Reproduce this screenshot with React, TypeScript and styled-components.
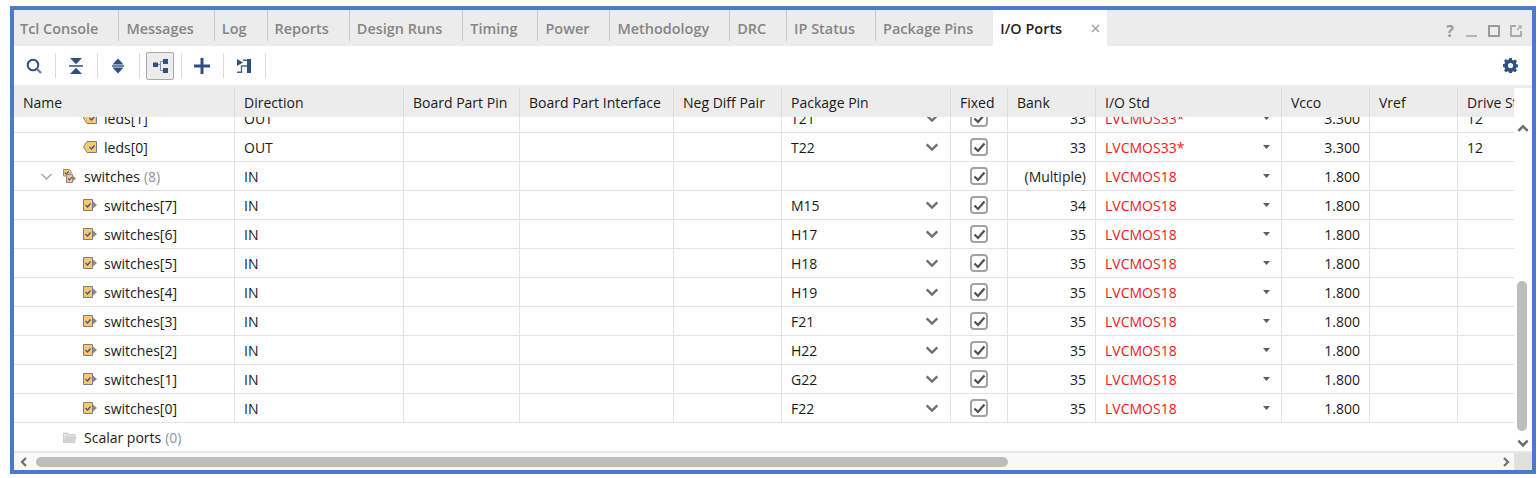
import * as React from 'react';
import styled, { createGlobalStyle } from 'styled-components';

const FONT = `"Open Sans", "Noto Sans", "Liberation Sans", sans-serif`;
const NAVY = '#2f5085';
const COLUMNS = '221px 169px 116px 154px 108px 169px 57px 88px 186px 88px 88px 56px';

const TABS = [
  'Tcl Console',
  'Messages',
  'Log',
  'Reports',
  'Design Runs',
  'Timing',
  'Power',
  'Methodology',
  'DRC',
  'IP Status',
  'Package Pins',
];

const HEADERS = [
  'Name',
  'Direction',
  'Board Part Pin',
  'Board Part Interface',
  'Neg Diff Pair',
  'Package Pin',
  'Fixed',
  'Bank',
  'I/O Std',
  'Vcco',
  'Vref',
  'Drive Strength',
];

type PortRow = {
  name: string;
  kind: 'in' | 'out' | 'group';
  dir: string;
  pin?: string;
  bank: string;
  std: string;
  vcco: string;
  drive?: string;
  count?: number;
};

const ROWS: PortRow[] = [
  { name: 'leds[1]', kind: 'out', dir: 'OUT', pin: 'T21', bank: '33', std: 'LVCMOS33*', vcco: '3.300', drive: '12' },
  { name: 'leds[0]', kind: 'out', dir: 'OUT', pin: 'T22', bank: '33', std: 'LVCMOS33*', vcco: '3.300', drive: '12' },
  { name: 'switches', kind: 'group', count: 8, dir: 'IN', bank: '(Multiple)', std: 'LVCMOS18', vcco: '1.800' },
  { name: 'switches[7]', kind: 'in', dir: 'IN', pin: 'M15', bank: '34', std: 'LVCMOS18', vcco: '1.800' },
  { name: 'switches[6]', kind: 'in', dir: 'IN', pin: 'H17', bank: '35', std: 'LVCMOS18', vcco: '1.800' },
  { name: 'switches[5]', kind: 'in', dir: 'IN', pin: 'H18', bank: '35', std: 'LVCMOS18', vcco: '1.800' },
  { name: 'switches[4]', kind: 'in', dir: 'IN', pin: 'H19', bank: '35', std: 'LVCMOS18', vcco: '1.800' },
  { name: 'switches[3]', kind: 'in', dir: 'IN', pin: 'F21', bank: '35', std: 'LVCMOS18', vcco: '1.800' },
  { name: 'switches[2]', kind: 'in', dir: 'IN', pin: 'H22', bank: '35', std: 'LVCMOS18', vcco: '1.800' },
  { name: 'switches[1]', kind: 'in', dir: 'IN', pin: 'G22', bank: '35', std: 'LVCMOS18', vcco: '1.800' },
  { name: 'switches[0]', kind: 'in', dir: 'IN', pin: 'F22', bank: '35', std: 'LVCMOS18', vcco: '1.800' },
];

const GlobalStyle = createGlobalStyle`
  html, body {
    margin: 0;
    background: #fff;
  }
  body {
    font-family: ${FONT};
    font-size: 14px;
    color: #1a1a1a;
  }
`;

const Page = styled.div`
  box-sizing: border-box;
  width: 1540px;
  height: 478px;
  padding: 6px 4px 0 10px;
  overflow: hidden;
`;

const Frame = styled.div`
  box-sizing: border-box;
  height: 468px;
  border: 4px solid #4a7acb;
  display: flex;
  flex-direction: column;
  background: #fff;
`;

const TabBar = styled.div`
  display: flex;
  height: 36px;
  flex: none;
  background: #ececec;
`;

const Tab = styled.div`
  display: flex;
  align-items: center;
  height: 31px;
  padding: 5px 20px 0 7px;
  box-sizing: border-box;
  border-right: 1px solid #c8c8c8;
  font-weight: 600;
  font-size: 14.45px;
  color: #858585;
  white-space: nowrap;

  &:first-child {
    padding-left: 6px;
  }
`;

const ActiveTab = styled.div`
  display: flex;
  align-items: center;
  width: 114px;
  height: 36px;
  margin-left: -1px;
  padding: 0 7px;
  box-sizing: border-box;
  background: #fff;
  font-weight: 600;
  font-size: 14.45px;
  color: #222;
  white-space: nowrap;
`;

const CloseMark = styled.span`
  margin-left: auto;
  display: flex;
  color: #999;
`;

const WindowIcons = styled.div`
  margin-left: auto;
  display: flex;
  align-items: center;
  gap: 6px;
  padding: 5px 8px 0 0;
`;

const HelpMark = styled.span`
  width: 16px;
  text-align: center;
  font-weight: 700;
  font-size: 16px;
  color: #9a9a9a;
`;

const Toolbar = styled.div`
  display: flex;
  align-items: center;
  height: 39px;
  flex: none;
  padding-left: 6px;
`;

const ToolButton = styled.div<{ $active?: boolean }>`
  display: flex;
  align-items: center;
  justify-content: center;
  box-sizing: border-box;
  width: 28px;
  height: 28px;
  border: 1px solid ${p => (p.$active ? '#a8a8a8' : 'transparent')};
  border-radius: 2px;
  background: ${p => (p.$active ? '#ececec' : 'transparent')};
`;

const ToolSeparator = styled.div`
  width: 1px;
  height: 25px;
  margin: 0 6px 0 7px;
  background: #dcdcdc;
`;

const GearSlot = styled.div`
  margin-left: auto;
  display: flex;
  padding-right: 14px;
`;

const TableArea = styled.div`
  flex: 1;
  min-height: 0;
  display: flex;
  flex-direction: column;
  border-top: 3px solid #ececec;
`;

const TableMain = styled.div`
  flex: 1;
  min-height: 0;
  display: flex;
`;

const TableColumn = styled.div`
  width: 1500px;
  flex: none;
  display: flex;
  flex-direction: column;
  min-height: 0;
`;

const HeaderRow = styled.div`
  display: grid;
  grid-template-columns: ${COLUMNS};
  height: 29px;
  flex: none;
  background: #ececec;
`;

const HeaderCell = styled.div`
  box-sizing: border-box;
  display: flex;
  align-items: center;
  padding: 0 9px;
  border-right: 1px solid #dcdcdc;
  white-space: nowrap;
  overflow: hidden;

  &:last-child {
    border-right: none;
    padding-right: 0;
  }
`;

const Rows = styled.div`
  flex: 1;
  min-height: 0;
  overflow: hidden;
`;

const RowsInner = styled.div`
  margin-top: -13px;
`;

const Row = styled.div`
  display: grid;
  grid-template-columns: ${COLUMNS};
  height: 29px;
  box-sizing: border-box;
  border-bottom: 1px solid #e3e3e3;
`;

const Cell = styled.div<{ $right?: boolean; $red?: boolean }>`
  box-sizing: border-box;
  display: flex;
  align-items: center;
  justify-content: ${p => (p.$right ? 'flex-end' : 'flex-start')};
  padding: 0 9px;
  border-right: 1px solid #e3e3e3;
  color: ${p => (p.$red ? '#f51616' : 'inherit')};
  white-space: nowrap;

  &:last-child {
    border-right: none;
  }
`;

const NameCell = styled(Cell)<{ $indent: number }>`
  padding-left: ${p => p.$indent}px;
`;

const CenterCell = styled(Cell)`
  justify-content: center;
  padding: 0;
`;

const SelectCell = styled(Cell)<{ $pad: number }>`
  justify-content: space-between;
  padding-right: ${p => p.$pad}px;
`;

const Expander = styled.span`
  display: flex;
  width: 18px;
  margin-right: 8px;
  justify-content: center;
`;

const PortGlyph = styled.span`
  display: flex;
  flex: none;
  width: 14px;
  margin-right: 7px;
`;

const Count = styled.span`
  margin-left: 4px;
  color: #8d939c;
`;

const CheckBox = styled.span`
  box-sizing: border-box;
  display: flex;
  align-items: center;
  justify-content: center;
  width: 18px;
  height: 18px;
  border: 2px solid #a2a2a2;
  border-radius: 4px;
  background: #fff;
`;

const ScalarRow = styled.div`
  box-sizing: border-box;
  display: flex;
  align-items: center;
  height: 29px;
  padding-left: 49px;
`;

const VerticalBar = styled.div`
  width: 18px;
  flex: none;
  margin-top: 29px;
  display: flex;
  flex-direction: column;
  align-items: center;
  background: #fff;
`;

const VerticalThumb = styled.div`
  width: 10px;
  height: 150px;
  margin: 146px 2px 0 0;
  border-radius: 5px;
  background: #bdbdbd;
`;

const BarArrow = styled.div<{ $top: number }>`
  display: flex;
  margin-top: ${p => p.$top}px;
`;

const HorizontalBar = styled.div`
  display: flex;
  height: 19px;
  flex: none;
  border-top: 2px solid #e6e6e6;
  background: #f8f8f8;
  box-sizing: border-box;
`;

const HorizontalTrack = styled.div`
  flex: 1;
  display: flex;
  align-items: center;
  padding-left: 4px;
`;

const HorizontalThumb = styled.div`
  width: 972px;
  height: 10px;
  margin-left: 6px;
  border-radius: 5px;
  background: #bdbdbd;
`;

const ArrowEnd = styled.div`
  margin-left: auto;
  padding-right: 2px;
  display: flex;
`;

const Corner = styled.div`
  width: 18px;
  flex: none;
  background: #e0e0e0;
`;

const Chevron = ({ dir, size = 12, color = '#6e6e6e', sw = 2.2 }: { dir: 'up' | 'down' | 'left' | 'right'; size?: number; color?: string; sw?: number }) => {
  const d = {
    up: 'M2 8.5 6 4.5l4 4',
    down: 'M2 4 6 8l4-4',
    left: 'M8 2 4 6l4 4',
    right: 'M4 2l4 4-4 4',
  }[dir];
  return (
    <svg width={size} height={size} viewBox="0 0 12 12" fill="none">
      <path d={d} stroke={color} strokeWidth={sw} />
    </svg>
  );
};

const PortIcon = ({ kind }: { kind: PortRow['kind'] }) => {
  if (kind === 'group') {
    return (
      <svg width="14" height="16" viewBox="0 0 14 16">
        <path d="M.5 1.500h6l2 3-2 3.500h-6z" fill="#fbc86f" stroke="#8a8a8a" />
        <path d="M3.500 6.500h6v8h-6z" fill="#fbc86f" stroke="#8a8a8a" />
        <path d="M10 8l3 2.500-3 2.500z" fill="#8a8a8a" />
        <path d="M2 4.500l1.500 1.500L6 3.500M5 10.500l1.500 1.500L9 9" fill="none" stroke="#3c5a8c" strokeWidth="1.100" />
      </svg>
    );
  }
  if (kind === 'out') {
    return (
      <svg width="14" height="16" viewBox="0 0 14 16">
        <path d="M4 2.500h9.500v11H4L.5 8z" fill="#fbc86f" stroke="#7d7d7d" />
        <path d="M6.500 8l2 2 3-3.500" fill="none" stroke="#34558c" strokeWidth="1.200" />
      </svg>
    );
  }
  return (
    <svg width="14" height="16" viewBox="0 0 14 16">
      <path d="M.5 2.500h9v11h-9z" fill="#fbc86f" stroke="#7d7d7d" />
      <path d="M10 4.500L14 8l-4 3.500z" fill="#8a8a8a" />
      <path d="M2.500 8l2 2 3-3.500" fill="none" stroke="#34558c" strokeWidth="1.200" />
    </svg>
  );
};

const Caret = () => (
  <svg width="7" height="4" viewBox="0 0 7 4">
    <path d="M0 0h7L3.500 4z" fill="#5c5c5c" />
  </svg>
);

const Check = () => (
  <svg width="13" height="13" viewBox="0 0 13 13" fill="none">
    <path d="M1.500 6.500l3.500 3.500L11.500 2.500" stroke="#4f4f4f" strokeWidth="2.200" />
  </svg>
);

const ToolIcon = ({ name }: { name: string }) => {
  switch (name) {
    case 'search':
      return (
        <svg width="16" height="16" viewBox="0 0 16 16" fill="none">
          <circle cx="7" cy="7" r="5.300" stroke={NAVY} strokeWidth="2" />
          <path d="M11 11l4 4" stroke="#6f7f99" strokeWidth="2.400" />
        </svg>
      );
    case 'collapse':
      return (
        <svg width="14" height="16" viewBox="0 0 14 16" fill={NAVY}>
          <path d="M1 0h12L7 6.200z" />
          <path d="M0 7.200h14v1.500H0z" />
          <path d="M7 9.800l6 6.200H1z" />
        </svg>
      );
    case 'expand':
      return (
        <svg width="12" height="16" viewBox="0 0 12 16" fill={NAVY}>
          <path d="M6 .5l5.500 6H.5zM.5 9.500h11l-5.500 6z" />
          <path d="M0 7.300h12v1.400H0z" />
        </svg>
      );
    case 'hierarchy':
      return (
        <svg width="16" height="16" viewBox="0 0 16 16">
          <path d="M6 6.500h2.500M11 3.500H8.500v9H11" fill="none" stroke="#7d8fae" />
          <path d="M1 4.500h5v4.500H1zM11 1h5v5h-5zM11 10h5v5h-5z" fill={NAVY} />
        </svg>
      );
    case 'plus':
      return (
        <svg width="16" height="16" viewBox="0 0 16 16" fill={NAVY}>
          <path d="M6.500 0h3v6.500H16v3H9.500V16h-3V9.500H0v-3h6.500z" />
        </svg>
      );
    default:
      return (
        <svg width="14" height="16" viewBox="0 0 14 16">
          <path d="M0 1l6 3.500L0 8z" fill={NAVY} />
          <path d="M6 2.200h4M0 14.300h4.500V8H10" fill="none" stroke="#4d648f" strokeWidth="1.400" />
          <path d="M10 1h4v14h-4z" fill={NAVY} />
        </svg>
      );
  }
};

const Gear = () => (
  <svg width="15" height="15" viewBox="0 0 16 16">
    <path
      fillRule="evenodd"
      fill={NAVY}
      d="M6.600 0h2.800l.4 2.100 1.300.6 1.800-1.200 2 2-1.200 1.800.6 1.300 2.100.4v2.800l-2.100.4-.6 1.300 1.200 1.800-2 2-1.800-1.200-1.300.6-.4 2.100H6.600l-.4-2.100-1.300-.6-1.800 1.200-2-2 1.200-1.800-.6-1.300L-.400 9.400V6.600l2.100-.4.6-1.300L1.100 3.100l2-2 1.800 1.200 1.300-.6zM8 5.200a2.800 2.800 0 1 0 0 5.600 2.800 2.800 0 0 0 0-5.600z"
    />
  </svg>
);

const Folder = () => (
  <svg width="14" height="12" viewBox="0 0 14 12">
    <path d="M.5 1h4.500l1 1.500h6V5H3L.5 11z" fill="#e2e2e2" stroke="#c4c4c4" strokeWidth=".8" />
    <path d="M3 5h10.500l-1.500 6H.5z" fill="#d2d2d2" />
  </svg>
);

const ToolGroups = ['search', 'collapse', 'expand', 'hierarchy', 'plus', 'port'];

const App = () => (
  <>
    <GlobalStyle />
    <Page>
      <Frame>
        <TabBar>
          {TABS.map(tab => (
            <Tab key={tab}>{tab}</Tab>
          ))}
          <ActiveTab>
            I/O Ports
            <CloseMark>
              <svg width="9" height="9" viewBox="0 0 9 9" fill="none">
                <path d="M1 1l7 7M8 1L1 8" stroke="#999" strokeWidth="1.200" />
              </svg>
            </CloseMark>
          </ActiveTab>
          <WindowIcons>
            <HelpMark>?</HelpMark>
            <svg width="16" height="16" viewBox="0 0 16 16" fill="none">
              <path d="M2 13h11" stroke="#a8a8a8" strokeWidth="1.600" />
            </svg>
            <svg width="16" height="16" viewBox="0 0 16 16" fill="none">
              <path d="M3 3h10v10H3z" stroke="#9a9a9a" strokeWidth="2" />
            </svg>
            <svg width="16" height="16" viewBox="0 0 16 16" fill="none">
              <path d="M8 3H3v10h10V8" stroke="#a8a8a8" strokeWidth="1.800" />
              <path d="M9 7l4-4M10 3h3v3" stroke="#a8a8a8" strokeWidth="1.200" />
            </svg>
          </WindowIcons>
        </TabBar>
        <Toolbar>
          {ToolGroups.map(name => (
            <React.Fragment key={name}>
              <ToolButton $active={name === 'hierarchy'}>
                <ToolIcon name={name} />
              </ToolButton>
              <ToolSeparator />
            </React.Fragment>
          ))}
          <GearSlot>
            <Gear />
          </GearSlot>
        </Toolbar>
        <TableArea>
          <TableMain>
            <TableColumn>
              <HeaderRow>
                {HEADERS.map(header => (
                  <HeaderCell key={header}>{header}</HeaderCell>
                ))}
              </HeaderRow>
              <Rows>
                <RowsInner>
                  {ROWS.map(row => (
                    <Row key={row.name}>
                      <NameCell $indent={row.kind === 'group' ? 23 : 69}>
                        {row.kind === 'group' && (
                          <Expander>
                            <Chevron dir="down" size={15} color="#a6a6a6" sw={1.100} />
                          </Expander>
                        )}
                        <PortGlyph>
                          <PortIcon kind={row.kind} />
                        </PortGlyph>
                        {row.name}
                        {row.count !== undefined && <Count>({row.count})</Count>}
                      </NameCell>
                      <Cell>{row.dir}</Cell>
                      <Cell />
                      <Cell />
                      <Cell />
                      <SelectCell $pad={10}>
                        {row.pin}
                        {row.pin && <Chevron dir="down" size={16} color="#707070" sw={1.800} />}
                      </SelectCell>
                      <CenterCell>
                        <CheckBox>
                          <Check />
                        </CheckBox>
                      </CenterCell>
                      <Cell $right>{row.bank}</Cell>
                      <SelectCell $red $pad={11}>
                        {row.std}
                        <Caret />
                      </SelectCell>
                      <Cell $right>{row.vcco}</Cell>
                      <Cell />
                      <Cell>{row.drive}</Cell>
                    </Row>
                  ))}
                  <ScalarRow>
                    <PortGlyph>
                      <Folder />
                    </PortGlyph>
                    Scalar ports
                    <Count>(0)</Count>
                  </ScalarRow>
                </RowsInner>
              </Rows>
            </TableColumn>
            <VerticalBar>
              <BarArrow $top={4}>
                <Chevron dir="up" size={14} />
              </BarArrow>
              <VerticalThumb />
              <BarArrow $top={5}>
                <Chevron dir="down" size={14} />
              </BarArrow>
            </VerticalBar>
          </TableMain>
          <HorizontalBar>
            <HorizontalTrack>
              <Chevron dir="left" size={12} />
              <HorizontalThumb />
              <ArrowEnd>
                <Chevron dir="right" size={12} />
              </ArrowEnd>
            </HorizontalTrack>
            <Corner />
          </HorizontalBar>
        </TableArea>
      </Frame>
    </Page>
  </>
);

export default App;
